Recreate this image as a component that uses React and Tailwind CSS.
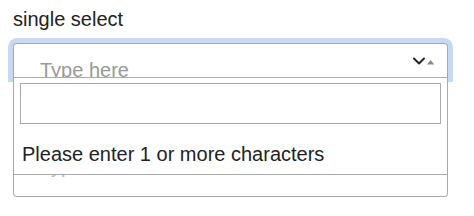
import React from 'react';

const Arrows = () => (
  <svg width="22" height="9" viewBox="0 0 22 9" className="block">
    <path d="M1 1.5 L6 6.5 L11 1.5" fill="none" stroke="#222" strokeWidth="1.9" strokeLinecap="round" strokeLinejoin="round" />
    <path d="M14 7.5 L17.6 3 L21.2 7.5 Z" fill="#888" />
  </svg>
);

export default function App() {
  return (
    <div className="px-[13px] pt-[7px] font-['Liberation_Sans',Arial,sans-serif] text-[#222] bg-white">
      <div className="text-[20px] leading-[24px]">single select</div>

      <div className="relative mt-[12px] w-[435px]">
        {/* selection */}
        <div className="flex items-start justify-between h-[34px] border border-b-0 border-[#aaa] rounded-t-[4px] bg-white pl-[26px] pr-[12px] shadow-[0_0_0_5px_#c6daf6]">
          <span className="mt-[16px] text-[20px] leading-[20px] text-[#999]">Type here</span>
          <span className="mt-[13px]"><Arrows /></span>
        </div>
        <div className="h-[120px] border border-t-0 border-[#aaa] rounded-b-[4px] bg-white pl-[26px] pt-[79px]">
          <span className="block text-[20px] leading-[20px] text-[#bbb]">Type here</span>
        </div>

        {/* dropdown */}
        <div className="absolute z-10 left-0 right-0 top-[34px] h-[98px] border border-[#aaa] bg-white px-[6px] pt-[5px]">
          <div className="h-[41px] border border-[#aaa] bg-white"></div>
          <div className="px-[2px] pt-[18px] text-[20px] leading-[24px] whitespace-nowrap">Please enter 1 or more characters</div>
        </div>
      </div>
    </div>
  );
}
